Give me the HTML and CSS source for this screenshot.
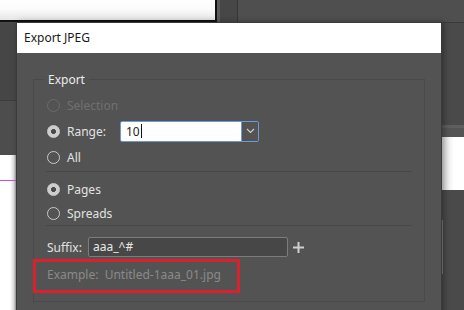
FILE: index.html
```html
<!DOCTYPE html>
<html>
<head>
<meta charset="utf-8">
<link rel="stylesheet" href="styles.css">
</head>
<body>
<div class="desk">
  <div class="doc-top"></div>
  <div class="strip-top"></div>
  <div class="left-panel"></div>
  <div class="left-page"><div class="pink"></div></div>
  <div class="right-band"></div>
  <div class="right-page"></div>
  <div class="thumb"></div>

  <div class="dialog">
    <div class="titlebar">Export JPEG</div>
    <div class="dbody">
      <div class="group">
        <div class="legend">Export</div>
        <div class="row r26 disabled">
          <span class="radio"></span><span class="lbl">Selection</span>
        </div>
        <div class="row r26">
          <span class="radio on"></span><span class="lbl wide">Range:</span>
          <div class="combo">
            <div class="field"><span class="val">10</span><span class="caret"></span></div>
            <div class="dd">
              <svg width="9" height="6" viewBox="0 0 9 6"><path d="M1 1 L4.5 4.5 L8 1" fill="none" stroke="#d0d0d0" stroke-width="1.1"/></svg>
            </div>
          </div>
        </div>
        <div class="row r26">
          <span class="radio"></span><span class="lbl">All</span>
        </div>
        <div class="sep sep1"></div>
        <div class="row r24">
          <span class="radio on"></span><span class="lbl">Pages</span>
        </div>
        <div class="row r24">
          <span class="radio"></span><span class="lbl">Spreads</span>
        </div>
        <div class="sep sep2"></div>
        <div class="row suffix">
          <span class="slbl">Suffix:</span>
          <div class="sinput">aaa_^#</div>
          <svg class="plus" width="11" height="11" viewBox="0 0 11 11"><path d="M5.5 0 V11 M0 5.5 H11" stroke="#cfcfcf" stroke-width="2"/></svg>
        </div>
        <div class="row example">Example:&nbsp; Untitled-1aaa_01.jpg</div>
        <div class="redbox"></div>
      </div>
    </div>
  </div>
</div>
</body>
</html>
```

FILE: styles.css
```css
* { box-sizing: border-box; }
html, body { margin: 0; padding: 0; }
body {
  width: 464px;
  height: 310px;
  overflow: hidden;
  background: #4b4b4b;
  font-family: "Noto Sans", "Open Sans", sans-serif;
  font-size: 12px;
}
.desk { position: relative; width: 464px; height: 310px; background: #4a4a4a; }

.doc-top {
  position: absolute; left: 0; top: 0; width: 217px; height: 22px;
  background: linear-gradient(#ffffff 0%, #fbfbfb 45%, #e6e6e6 100%);
  border-right: 2px solid #111;
  border-bottom: 2px solid #111;
}
.strip-top {
  position: absolute; left: 217px; top: 0; width: 247px; height: 23px;
  background: linear-gradient(90deg, #5c5c5c 0 3px, #474747 3px 20px, #383838 20px 21px, #4f4f4f 21px);
  border-bottom: 1px solid #3a3a3a;
}
.left-panel {
  position: absolute; left: 0; top: 23px; width: 16px; height: 132px;
  background: linear-gradient(#464646 0 77px, #3d3d3d 77px 78px, #4d4d4d 78px);
}
.left-page {
  position: absolute; left: 0; top: 155px; width: 16px; height: 155px;
  background: linear-gradient(90deg, #ffffff 0 10px, #dcdcdc 14px, #9a9a9a 16px);
}
.pink { position: absolute; left: 0; top: 25px; width: 16px; height: 1px; background: #d44bd6; }
.right-band {
  position: absolute; left: 442px; top: 125px; width: 22px; height: 12px;
  background: linear-gradient(#5e5e5e 0 3px, #545454 3px);
}
.right-page {
  position: absolute; left: 442px; top: 137px; width: 22px; height: 53px;
  background: linear-gradient(90deg, #dedede 0, #ffffff 12px);
}
.thumb { position: absolute; left: 441px; top: 220px; width: 2px; height: 54px; background: #7a7e84; }

.dialog {
  position: absolute; left: 16px; top: 22px; width: 426px; height: 300px;
  background: #535353;
  border: 1px solid #3b3b3b;
  box-shadow: 2px 0 6px rgba(0,0,0,0.35);
}
.titlebar {
  height: 30px;
  background: #ffffff;
  color: #1a1a1a;
  padding-left: 7px;
  line-height: 30px;
  font-size: 12px;
}
.dbody { padding: 26px 0 0 16px; }

.group {
  position: relative;
  width: 392px;
  height: 223px;
  border: 1px solid #4a4a4a;
  padding: 12px 12px 0 12px;
  color: #e2e2e2;
}
.legend {
  position: absolute; left: 10px; top: -8px;
  padding: 0 4px;
  background: #535353;
  line-height: 16px;
  color: #ececec;
}
.row { display: flex; align-items: center; }
.r26 { height: 26px; }
.r24 { height: 24px; }
.radio {
  width: 13px; height: 13px; border-radius: 50%;
  border: 1px solid #c9c9c9;
  margin-left: 1px;
  flex: none;
}
.radio.on {
  background: radial-gradient(circle, #4a4a4a 0 2.2px, #cdcdcd 2.8px);
  border-color: #cdcdcd;
}
.lbl { margin-left: 7px; color: #e2e2e2; }
.lbl.wide { width: 53px; }
.disabled .radio { border-color: #6a6a6a; }
.disabled .lbl { color: #707070; }

.combo {
  display: flex;
  width: 139px; height: 21px;
  border: 1px solid #6a9bd3;
  border-radius: 2px;
  overflow: hidden;
}
.field {
  flex: 1; background: #ffffff; display: flex; align-items: center;
  padding-left: 5px; color: #222;
}
.caret { width: 1px; height: 14px; background: #111; margin-left: 1px; }
.dd {
  width: 17px; background: #535353; border-left: 1px solid #6a9bd3;
  display: flex; align-items: center; justify-content: center;
}

.sep { height: 1px; background: #484848; }
.sep1 { margin-top: 1px; margin-bottom: 5px; }
.sep2 { margin-top: 0; }

.suffix { margin-top: 11px; height: 20px; }
.slbl { width: 42px; padding-left: 1px; color: #e2e2e2; }
.sinput {
  width: 200px; height: 20px;
  background: #474747;
  border: 1px solid #7c7c7c;
  border-radius: 2px;
  color: #e8e8e8;
  padding-left: 4px;
  line-height: 18px;
}
.plus { margin-left: 5px; }

.example { margin-top: 7px; height: 20px; padding-left: 1px; color: #8a8a8a; }
.redbox {
  position: absolute; left: -1px; top: 179px;
  width: 207px; height: 34px;
  border: 3px solid #d9222e;
}
```
